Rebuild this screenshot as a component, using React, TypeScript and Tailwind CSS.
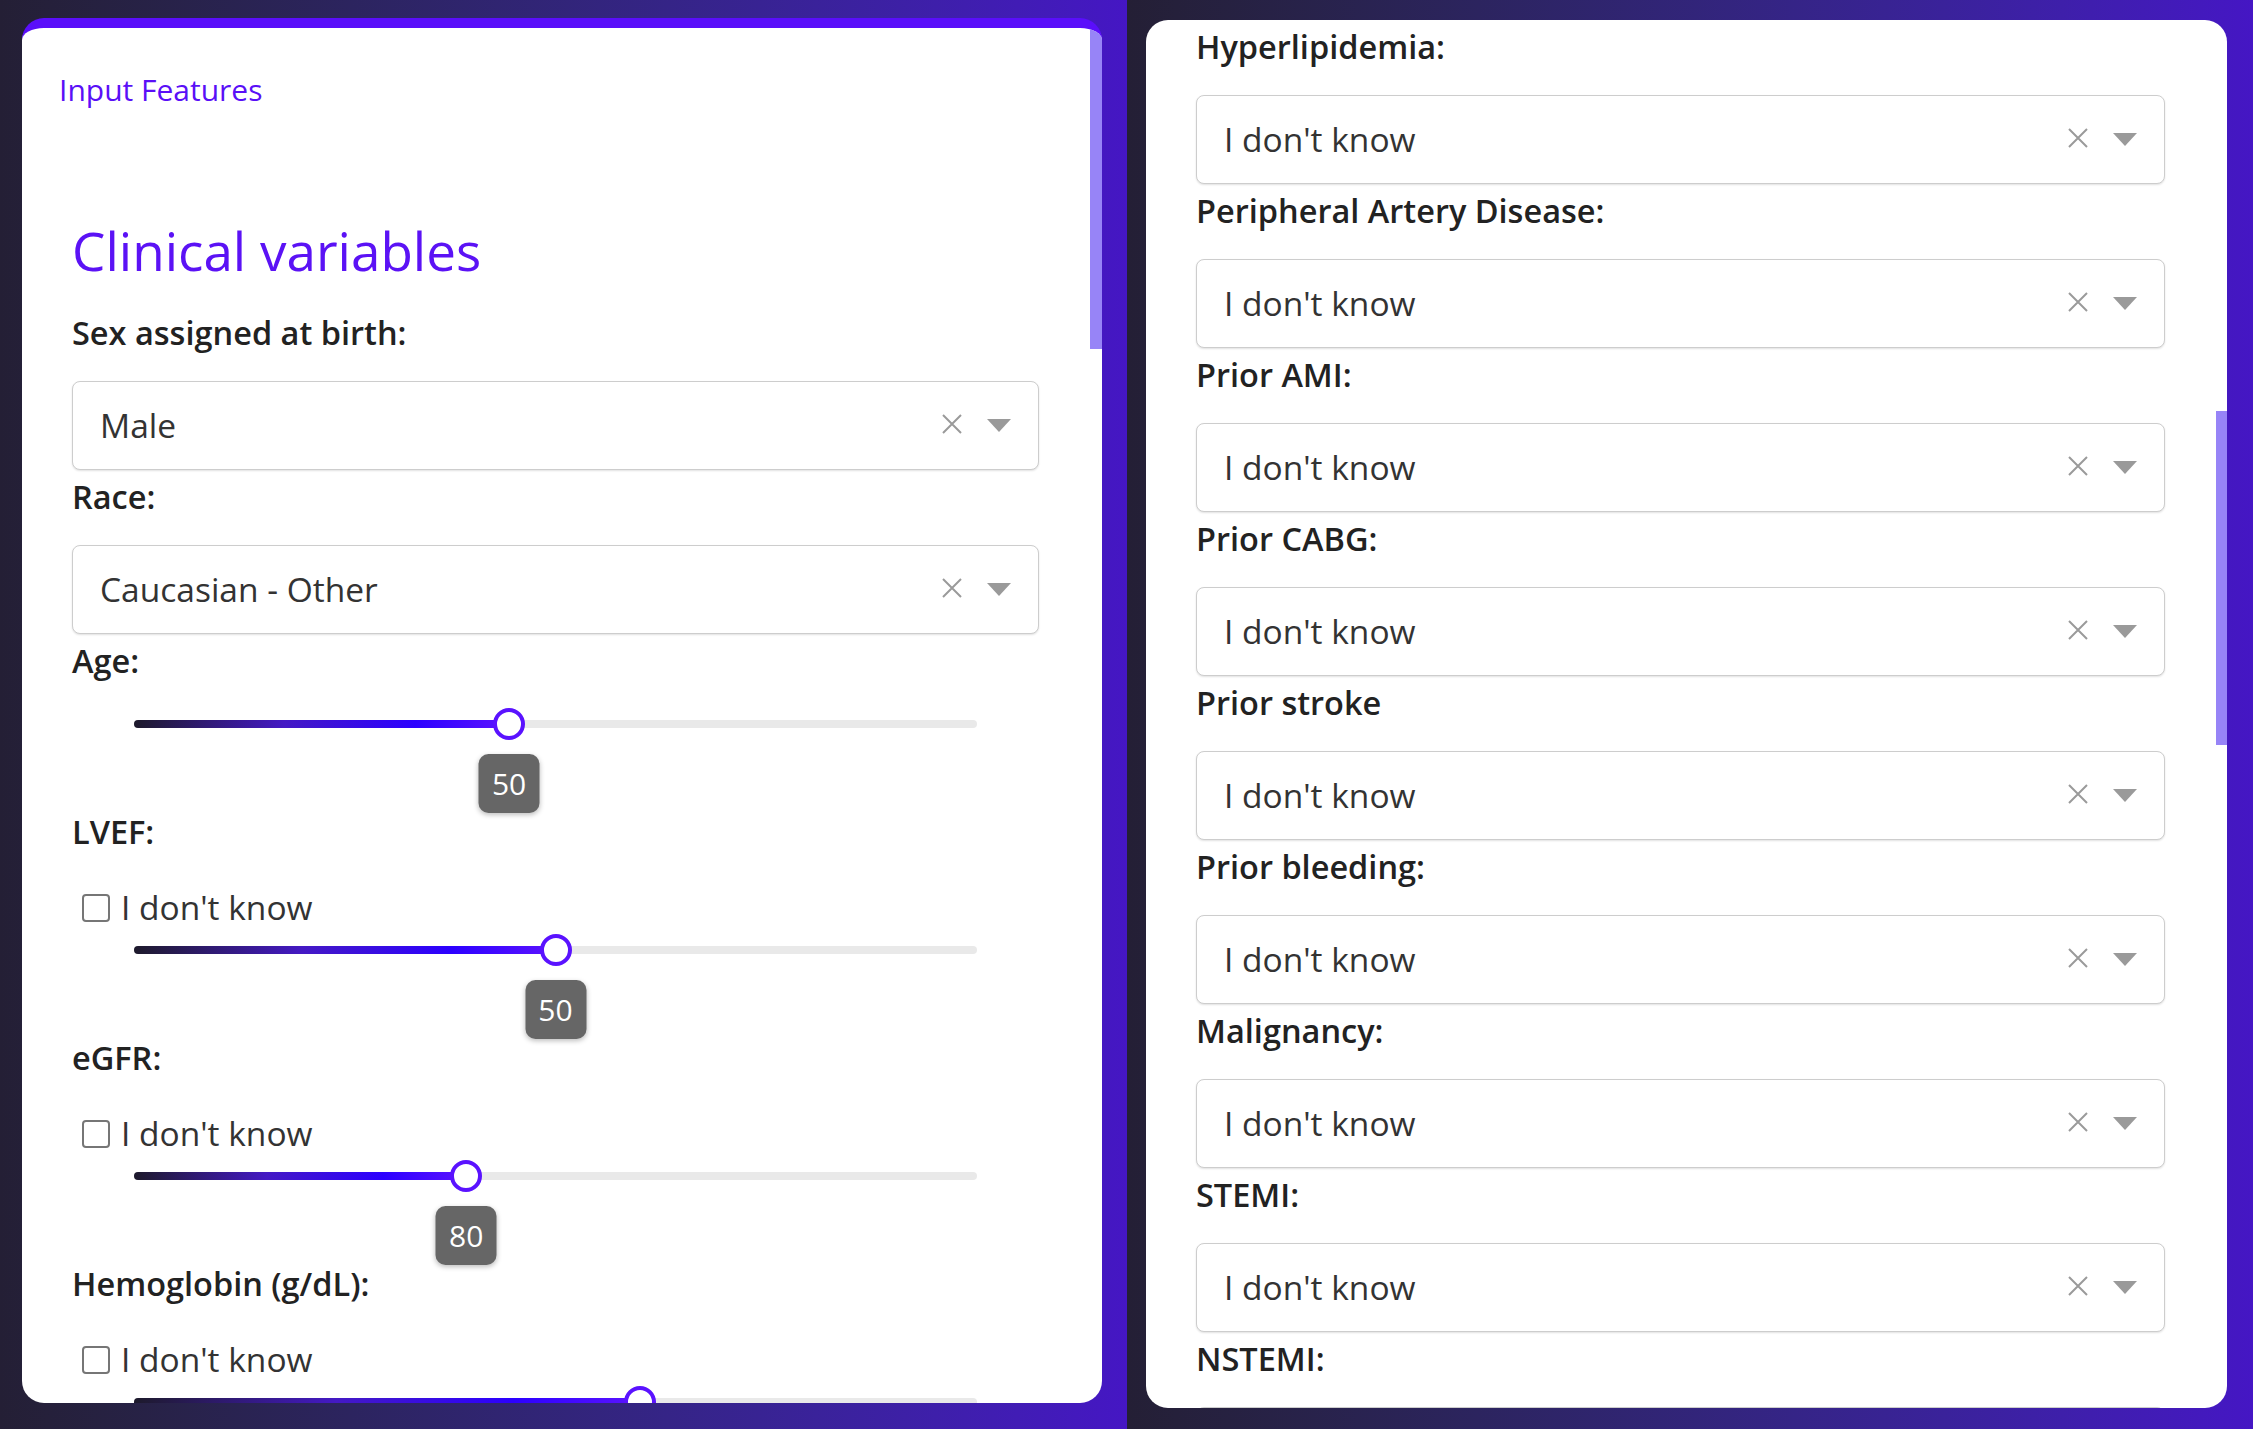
import type { ReactNode } from 'react';

function FieldLabel({ children }: { children: ReactNode }) {
  return (
    <div className="pt-[7px] pb-[28px] text-[32.5px] font-semibold leading-[40px] text-[#222]">
      {children}
    </div>
  );
}

function ClearIcon() {
  return (
    <svg width="22" height="22" viewBox="0 0 22 22" fill="none" stroke="#9a9a9a" strokeWidth={2}>
      <path d="M2 2l18 18M20 2L2 20" />
    </svg>
  );
}

function Caret() {
  return (
    <svg width="24" height="13" viewBox="0 0 24 13" fill="#9a9a9a">
      <path d="M0 0h24L12 13z" />
    </svg>
  );
}

function SelectBox({ value }: { value: string }) {
  return (
    <div className="flex h-[89px] items-center rounded-[8px] border-[1.5px] border-[#cdcdcd] bg-white pl-[27px] pr-[27px] shadow-[0_1px_2px_rgba(0,0,0,0.12)]">
      <span className="text-[33.5px] leading-none text-[#333]">{value}</span>
      <div className="ml-auto flex items-center gap-[24px]">
        <span className="-mt-[4px]">
          <ClearIcon />
        </span>
        <Caret />
      </div>
    </div>
  );
}

function DontKnow() {
  return (
    <div className="flex h-[55px] items-center gap-[11px] pl-[10px]">
      <span className="h-[28px] w-[28px] rounded-[4px] border-2 border-[#767676] bg-white" />
      <span className="text-[33.5px] leading-none text-[#333]">I don't know</span>
    </div>
  );
}

function RangeSlider({ pct, value }: { pct: number; value: number }) {
  return (
    <div className="h-[96px] px-[62px] pt-[11px]">
      <div className="relative h-[8px] rounded-full bg-[#e9e9e9]">
        <div
          className="absolute left-0 top-0 h-full rounded-full bg-[linear-gradient(90deg,#1d1a2b_0%,#4419c4_40%,#2c00ff_75%,#5c14ff_100%)]"
          style={{ width: `${pct}%` }}
        />
        <div
          className="absolute top-1/2 h-[32px] w-[32px] -translate-x-1/2 -translate-y-1/2 rounded-full border-[4px] border-[#5a12ff] bg-white"
          style={{ left: `${pct}%` }}
        />
        <div
          className="absolute top-[34px] flex h-[59px] w-[61px] -translate-x-1/2 items-center justify-center rounded-[10px] bg-[#666] text-[30px] text-white shadow-[0_2px_5px_rgba(0,0,0,0.25)]"
          style={{ left: `${pct}%` }}
        >
          {value}
        </div>
      </div>
    </div>
  );
}

const rightFields = [
  'Hyperlipidemia:',
  'Peripheral Artery Disease:',
  'Prior AMI:',
  'Prior CABG:',
  'Prior stroke',
  'Prior bleeding:',
  'Malignancy:',
  'STEMI:',
  'NSTEMI:',
];

export default function App() {
  return (
    <div className="flex h-[1429px] w-[2253px] overflow-hidden font-['Open_Sans',sans-serif]">
      {/* left screen */}
      <div className="h-full w-[1127px] bg-linear-to-r from-[#241f35] to-[#4516c4] pb-[26px] pl-[22px] pr-[25px] pt-[18px]">
        <div className="relative h-full overflow-hidden rounded-[22px] border-t-[10px] border-t-[#5a0efa] bg-white pl-[37px] pr-[63px]">
          <div className="absolute right-0 top-0 h-[321px] w-[12px] bg-[#9784f7]" />
          <div className="pt-[42px] text-[30px] font-medium leading-[40px] text-[#5a0ff7]">Input Features</div>
          <div className="pl-[13px]">
            <h2 className="mt-[109px] text-[53px] font-normal leading-[64px] text-[#5b12f5]">
              Clinical variables
            </h2>
            <div className="mt-[23px]">
              <FieldLabel>Sex assigned at birth:</FieldLabel>
              <SelectBox value="Male" />
              <FieldLabel>Race:</FieldLabel>
              <SelectBox value="Caucasian - Other" />
              <FieldLabel>Age:</FieldLabel>
              <RangeSlider pct={44.5} value={50} />
              <FieldLabel>LVEF:</FieldLabel>
              <DontKnow />
              <RangeSlider pct={50} value={50} />
              <FieldLabel>eGFR:</FieldLabel>
              <DontKnow />
              <RangeSlider pct={39.4} value={80} />
              <FieldLabel>Hemoglobin (g/dL):</FieldLabel>
              <DontKnow />
              <RangeSlider pct={60} value={13} />
            </div>
          </div>
        </div>
      </div>

      {/* right screen */}
      <div className="h-full w-[1126px] bg-linear-to-r from-[#241f35] to-[#4516c4] pb-[21px] pl-[19px] pr-[26px] pt-[20px]">
        <div className="relative h-full overflow-hidden rounded-[22px] bg-white pl-[50px] pr-[62px]">
          <div className="absolute right-0 top-[391px] h-[334px] w-[11px] bg-[#9784f7]" />
          {rightFields.map((f) => (
            <div key={f}>
              <FieldLabel>{f}</FieldLabel>
              <SelectBox value="I don't know" />
            </div>
          ))}
        </div>
      </div>
    </div>
  );
}
